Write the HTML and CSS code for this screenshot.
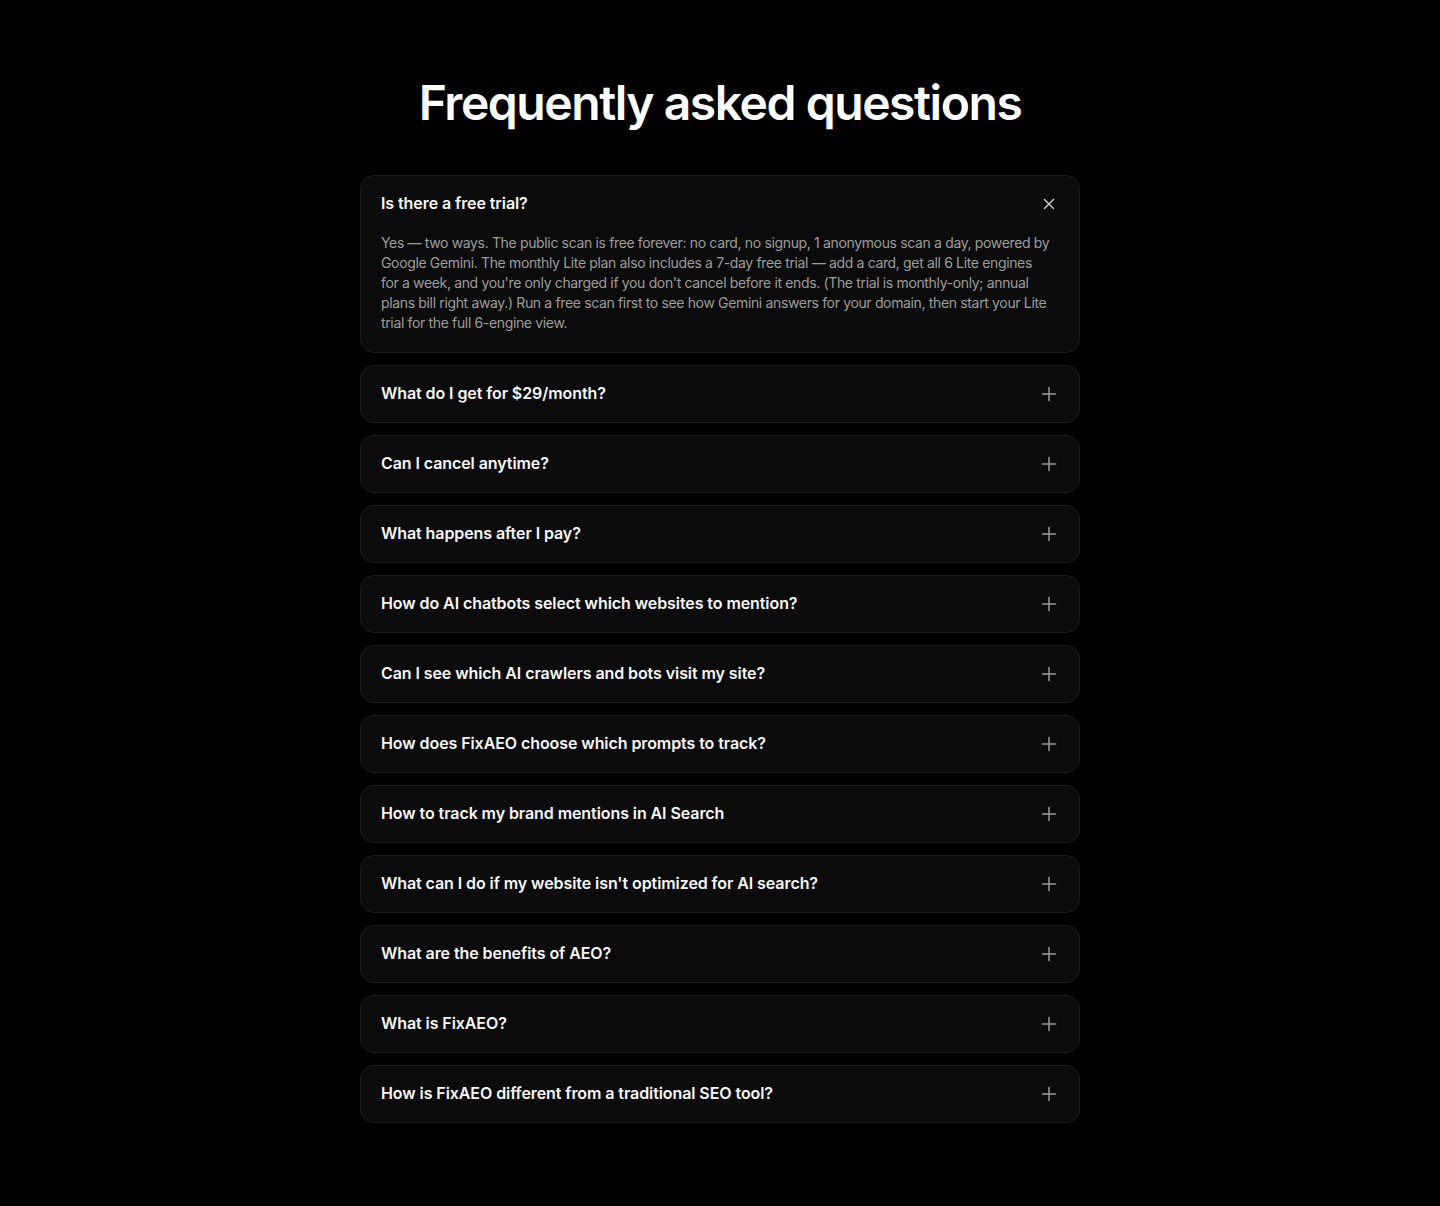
FILE: index.html
```html
<!DOCTYPE html>
<html lang="en">
<head>
<meta charset="utf-8">
<title>FAQ</title>
<link rel="stylesheet" href="styles.css">
</head>
<body>
<section class="faq">
  <h1 class="faq-title">Frequently asked questions</h1>
  <div class="faq-list">
    <div class="faq-item open">
      <div class="faq-q">
        <span>Is there a free trial?</span>
        <svg class="icon" viewBox="0 0 20 20"><path d="M5.5 5.5L14.5 14.5M14.5 5.5L5.5 14.5"/></svg>
      </div>
      <p class="faq-a">Yes — two ways. The public scan is free forever: no card, no signup, 1 anonymous scan a day, powered by<br>Google Gemini. The monthly Lite plan also includes a 7-day free trial — add a card, get all 6 Lite engines<br>for a week, and you're only charged if you don't cancel before it ends. (The trial is monthly-only; annual<br>plans bill right away.) Run a free scan first to see how Gemini answers for your domain, then start your Lite<br>trial for the full 6-engine view.</p>
    </div>
    <div class="faq-item"><div class="faq-q"><span>What do I get for $29/month?</span><svg class="icon" viewBox="0 0 20 20"><path d="M10 3.5V16.5M3.5 10H16.5"/></svg></div></div>
    <div class="faq-item"><div class="faq-q"><span>Can I cancel anytime?</span><svg class="icon" viewBox="0 0 20 20"><path d="M10 3.5V16.5M3.5 10H16.5"/></svg></div></div>
    <div class="faq-item"><div class="faq-q"><span>What happens after I pay?</span><svg class="icon" viewBox="0 0 20 20"><path d="M10 3.5V16.5M3.5 10H16.5"/></svg></div></div>
    <div class="faq-item"><div class="faq-q"><span>How do AI chatbots select which websites to mention?</span><svg class="icon" viewBox="0 0 20 20"><path d="M10 3.5V16.5M3.5 10H16.5"/></svg></div></div>
    <div class="faq-item"><div class="faq-q"><span>Can I see which AI crawlers and bots visit my site?</span><svg class="icon" viewBox="0 0 20 20"><path d="M10 3.5V16.5M3.5 10H16.5"/></svg></div></div>
    <div class="faq-item"><div class="faq-q"><span>How does FixAEO choose which prompts to track?</span><svg class="icon" viewBox="0 0 20 20"><path d="M10 3.5V16.5M3.5 10H16.5"/></svg></div></div>
    <div class="faq-item"><div class="faq-q"><span>How to track my brand mentions in AI Search</span><svg class="icon" viewBox="0 0 20 20"><path d="M10 3.5V16.5M3.5 10H16.5"/></svg></div></div>
    <div class="faq-item"><div class="faq-q"><span>What can I do if my website isn't optimized for AI search?</span><svg class="icon" viewBox="0 0 20 20"><path d="M10 3.5V16.5M3.5 10H16.5"/></svg></div></div>
    <div class="faq-item"><div class="faq-q"><span>What are the benefits of AEO?</span><svg class="icon" viewBox="0 0 20 20"><path d="M10 3.5V16.5M3.5 10H16.5"/></svg></div></div>
    <div class="faq-item"><div class="faq-q"><span>What is FixAEO?</span><svg class="icon" viewBox="0 0 20 20"><path d="M10 3.5V16.5M3.5 10H16.5"/></svg></div></div>
    <div class="faq-item"><div class="faq-q"><span>How is FixAEO different from a traditional SEO tool?</span><svg class="icon" viewBox="0 0 20 20"><path d="M10 3.5V16.5M3.5 10H16.5"/></svg></div></div>
  </div>
</section>
</body>
</html>
```
FILE: styles.css
```css
html, body {
  margin: 0;
  padding: 0;
  background: #000;
}
body {
  font-family: Inter, "Liberation Sans", sans-serif;
  color: #fff;
}
.faq {
  width: 720px;
  margin: 0 auto;
  padding-top: 74px;
  padding-bottom: 84px;
}
.faq-title {
  margin: 0 0 43px;
  text-align: center;
  font-size: 48px;
  line-height: 58px;
  font-weight: 600;
  letter-spacing: -0.03em;
}
.faq-list {
  display: flex;
  flex-direction: column;
  gap: 12px;
}
.faq-item {
  background: #0b0b0b;
  border: 1px solid #1c1c1c;
  border-radius: 14px;
}
.faq-q {
  display: flex;
  align-items: center;
  justify-content: space-between;
  padding: 18px 20px 18px;
  font-size: 16px;
  line-height: 19px;
  font-weight: 600;
  color: #f7f7f7;
  letter-spacing: -0.005em;
}
.faq-q span {
  padding-bottom: 1px;
}
.icon {
  width: 20px;
  height: 20px;
  fill: none;
  stroke: #9a9a9a;
  stroke-width: 1.5;
  stroke-linecap: round;
}
.open .icon {
  stroke: #c8c8c8;
}
.faq-a {
  margin: 1px 0 0;
  padding: 0 20px 19px;
  font-size: 14px;
  line-height: 20px;
  letter-spacing: -0.35px;
  color: #9d9d9d;
}
```
